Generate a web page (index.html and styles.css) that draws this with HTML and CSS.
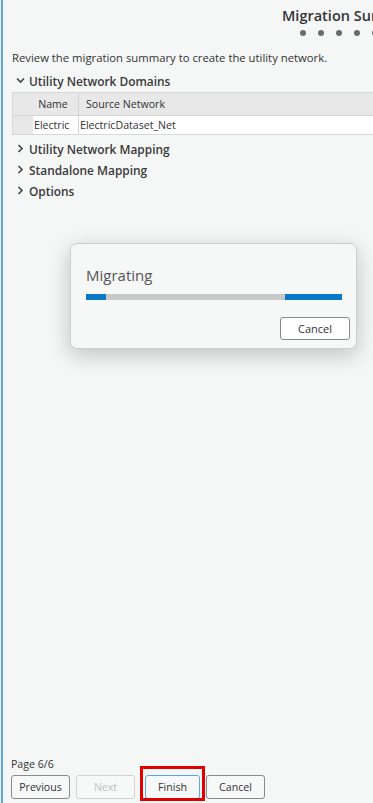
FILE: index.html
```html
<!DOCTYPE html>
<html>
<head>
<meta charset="utf-8">
<link rel="stylesheet" href="styles.css">
</head>
<body>
<div class="panel">
  <div class="main">
    <div class="header">
      <div class="title">Migration Summary</div>
      <div class="dots"><span></span><span></span><span></span><span></span><span></span><span></span></div>
    </div>
    <p class="intro">Review the migration summary to create the utility network.</p>
    <div class="section open">
      <svg class="chev" width="9" height="9" viewBox="0 0 9 9"><path d="M1 2.5 L4.5 6 L8 2.5" fill="none" stroke="#444" stroke-width="1.6"/></svg>
      <span>Utility Network Domains</span>
    </div>
    <div class="table">
      <div class="row head">
        <div class="c0"></div>
        <div class="c1">Name</div>
        <div class="c2">Source Network</div>
      </div>
      <div class="row data">
        <div class="c0"></div>
        <div class="c1">Electric</div>
        <div class="c2">ElectricDataset_Net</div>
      </div>
    </div>
    <div class="section">
      <svg class="chev" width="9" height="9" viewBox="0 0 9 9"><path d="M2.5 1 L6 4.5 L2.5 8" fill="none" stroke="#444" stroke-width="1.6"/></svg>
      <span>Utility Network Mapping</span>
    </div>
    <div class="section">
      <svg class="chev" width="9" height="9" viewBox="0 0 9 9"><path d="M2.5 1 L6 4.5 L2.5 8" fill="none" stroke="#444" stroke-width="1.6"/></svg>
      <span>Standalone Mapping</span>
    </div>
    <div class="section">
      <svg class="chev" width="9" height="9" viewBox="0 0 9 9"><path d="M2.5 1 L6 4.5 L2.5 8" fill="none" stroke="#444" stroke-width="1.6"/></svg>
      <span>Options</span>
    </div>
  </div>
  <div class="footer">
    <div class="page">Page 6/6</div>
    <div class="buttons">
      <button class="btn">Previous</button>
      <button class="btn disabled">Next</button>
      <span class="highlight"><button class="btn focus">Finish</button></span>
      <button class="btn">Cancel</button>
    </div>
  </div>
  <div class="dialog">
    <div class="dlg-title">Migrating</div>
    <div class="progress"><div class="seg seg1"></div><div class="seg seg2"></div></div>
    <div class="dlg-actions"><button class="btn dlg-btn">Cancel</button></div>
  </div>
</div>
</body>
</html>
```
FILE: styles.css
```css
* { box-sizing: border-box; }
html, body { margin: 0; padding: 0; }
body {
  width: 373px;
  height: 803px;
  overflow: hidden;
  background: #eef0f0;
  font-family: "Open Sans", "Noto Sans", sans-serif;
  color: #333;
}
.panel {
  position: relative;
  margin-left: 1px;
  height: 803px;
  border-left: 2px solid #5ca6e4;
  background: #f5f7f7;
  display: flex;
  flex-direction: column;
  justify-content: space-between;
  overflow: hidden;
}
.main { display: flex; flex-direction: column; }
.header {
  display: flex;
  flex-direction: column;
  align-items: flex-start;
  padding: 6px 0 0 279px;
  white-space: nowrap;
}
.title {
  font-size: 14.5px;
  font-weight: 600;
  color: #333;
  line-height: 20px;
}
.dots { display: flex; gap: 12px; margin: 4px 0 0 18px; }
.dots span { width: 6px; height: 6px; border-radius: 50%; background: #6b6b6b; flex: none; }
.intro {
  margin: 15px 0 0 9px;
  font-size: 11.3px;
  line-height: 14px;
  color: #333;
  white-space: nowrap;
}
.section {
  display: flex;
  align-items: center;
  gap: 4px;
  padding-left: 13px;
  font-size: 11.9px;
  font-weight: 600;
  color: #3a3a3a;
  height: 21px;
  white-space: nowrap;
}
.section.open { margin-top: 5px; }
.table {
  margin: 1px 0 3px 9px;
  border-top: 1px solid #d8d8d8;
  border-bottom: 1px solid #d8d8d8;
  border-left: 1px solid #d8d8d8;
  font-size: 10.6px;
}
.row { display: flex; }
.row.head { background: #e8e8e8; height: 23px; border-bottom: 1px solid #d4d4d4; }
.row.data { height: 18px; }
.c0 { width: 20px; background: #e8e8e8; flex: none; }
.c1 { width: 46px; flex: none; border-right: 1px solid #d4d4d4; display: flex; align-items: center; }
.c2 { flex: 1; display: flex; align-items: center; padding-left: 7px; white-space: nowrap; }
.row.head .c1 { justify-content: center; padding-right: 5px; }
.row.data .c1 { background: #fff; padding-left: 1px; }
.row.data .c2 { background: #fff; padding-left: 1px; }
.footer { padding: 0 0 4px 8px; }
.page { font-size: 10.6px; line-height: 14px; color: #333; margin-bottom: 4px; }
.buttons { display: flex; align-items: center; }
.btn {
  font-family: "Open Sans", "Noto Sans", sans-serif;
  font-size: 10.6px;
  color: #333;
  height: 24px;
  background: #f7f8f8;
  border: 1px solid #8a8a8a;
  border-radius: 3px;
  padding: 0;
  width: 59px;
  margin-right: 6px;
}
.btn.disabled { color: #c0c0c0; border-color: #d0d0d0; }
.btn.focus { border-color: #59a6e8; width: 55px; margin-right: 0; }
.highlight {
  position: relative;
  margin: 0 6px 0 4px;
  display: flex;
}
.highlight::after {
  content: "";
  position: absolute;
  left: -5px;
  right: -5px;
  top: -9px;
  bottom: -2px;
  border: 3px solid #e00000;
}
.dialog {
  position: absolute;
  left: 67px;
  top: 243px;
  width: 287px;
  height: 106px;
  background: #f6f7f7;
  border: 1px solid #cfcfcf;
  border-radius: 7px;
  box-shadow: 0 6px 22px rgba(0,0,0,0.22);
  padding: 20px 14px 0 15px;
}
.dlg-title { font-size: 15px; color: #555; line-height: 22px; }
.progress {
  margin-top: 8px;
  height: 6px;
  width: 256px;
  background: #c8c8c8;
  position: relative;
}
.seg { position: absolute; top: 0; height: 6px; background: #0a78c8; }
.seg1 { left: 0; width: 20px; }
.seg2 { right: 0; width: 57px; }
.dlg-actions { display: flex; justify-content: flex-end; margin-top: 17px; margin-right: -8px; }
.dlg-btn { width: 70px; height: 23px; margin: 0; background: #fff; border-color: #8a8a8a; font-size: 11px; }
```
